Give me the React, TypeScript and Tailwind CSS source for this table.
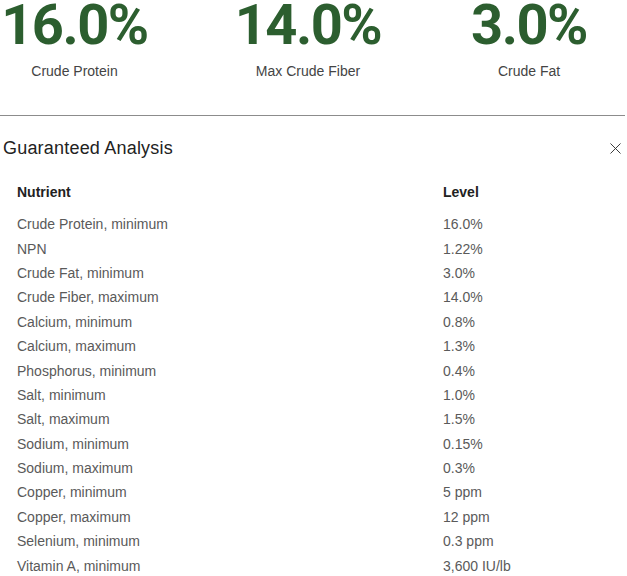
import { X } from "lucide-react";

const stats = [
  { value: "16.0%", label: "Crude Protein", w: "w-[149px]", gap: "" },
  { value: "14.0%", label: "Max Crude Fiber", w: "w-[148px]", gap: "ml-[85px]" },
  { value: "3.0%", label: "Crude Fat", w: "w-[118px]", gap: "ml-[88px]" },
];

const rows = [
  ["Crude Protein, minimum", "16.0%"],
  ["NPN", "1.22%"],
  ["Crude Fat, minimum", "3.0%"],
  ["Crude Fiber, maximum", "14.0%"],
  ["Calcium, minimum", "0.8%"],
  ["Calcium, maximum", "1.3%"],
  ["Phosphorus, minimum", "0.4%"],
  ["Salt, minimum", "1.0%"],
  ["Salt, maximum", "1.5%"],
  ["Sodium, minimum", "0.15%"],
  ["Sodium, maximum", "0.3%"],
  ["Copper, minimum", "5 ppm"],
  ["Copper, maximum", "12 ppm"],
  ["Selenium, minimum", "0.3 ppm"],
  ["Vitamin A, minimum", "3,600 IU/lb"],
];

const App = () => {
  return (
    <div className="w-[627px] h-[576px] overflow-hidden bg-white font-['Liberation_Sans',Arial,sans-serif]">
      {/* stats */}
      <div className="flex items-start pt-[2px]">
        {stats.map((s) => (
          <div key={s.label} className={`flex flex-col items-center ${s.w} ${s.gap}`}>
            <span className="font-['Roboto',sans-serif] text-[56px] leading-[46px] font-bold tracking-[-1.5px] text-[#2c5e2f] whitespace-nowrap">
              {s.value}
            </span>
            <span className="mt-[13px] text-[14px] leading-[20px] text-[#444] whitespace-nowrap">
              {s.label}
            </span>
          </div>
        ))}
      </div>

      <div className="mt-[34px] h-px bg-[#8c8c8c] w-[625px]" />

      <div className="flex items-center justify-between pl-[3px] pr-[2px] mt-[20px] h-[24px]">
        <h2 className="text-[18px] leading-[24px] text-[#222] tracking-[0.2px]">
          Guaranteed Analysis
        </h2>
        <X className="w-[19px] h-[19px] text-[#333]" strokeWidth={1.2} />
      </div>

      <div className="mt-[20px] pl-[17px]">
        <div className="grid grid-cols-[426px_1fr] h-[24.5px] items-center text-[14px] font-bold text-[#222]">
          <span>Nutrient</span>
          <span>Level</span>
        </div>
        <div className="mt-[8px]">
          {rows.map(([name, level]) => (
            <div
              key={name}
              className="grid grid-cols-[426px_1fr] h-[24.4px] items-center text-[14px] text-[#5a5a5a]"
            >
              <span>{name}</span>
              <span>{level}</span>
            </div>
          ))}
        </div>
      </div>
    </div>
  );
};

export default App;
